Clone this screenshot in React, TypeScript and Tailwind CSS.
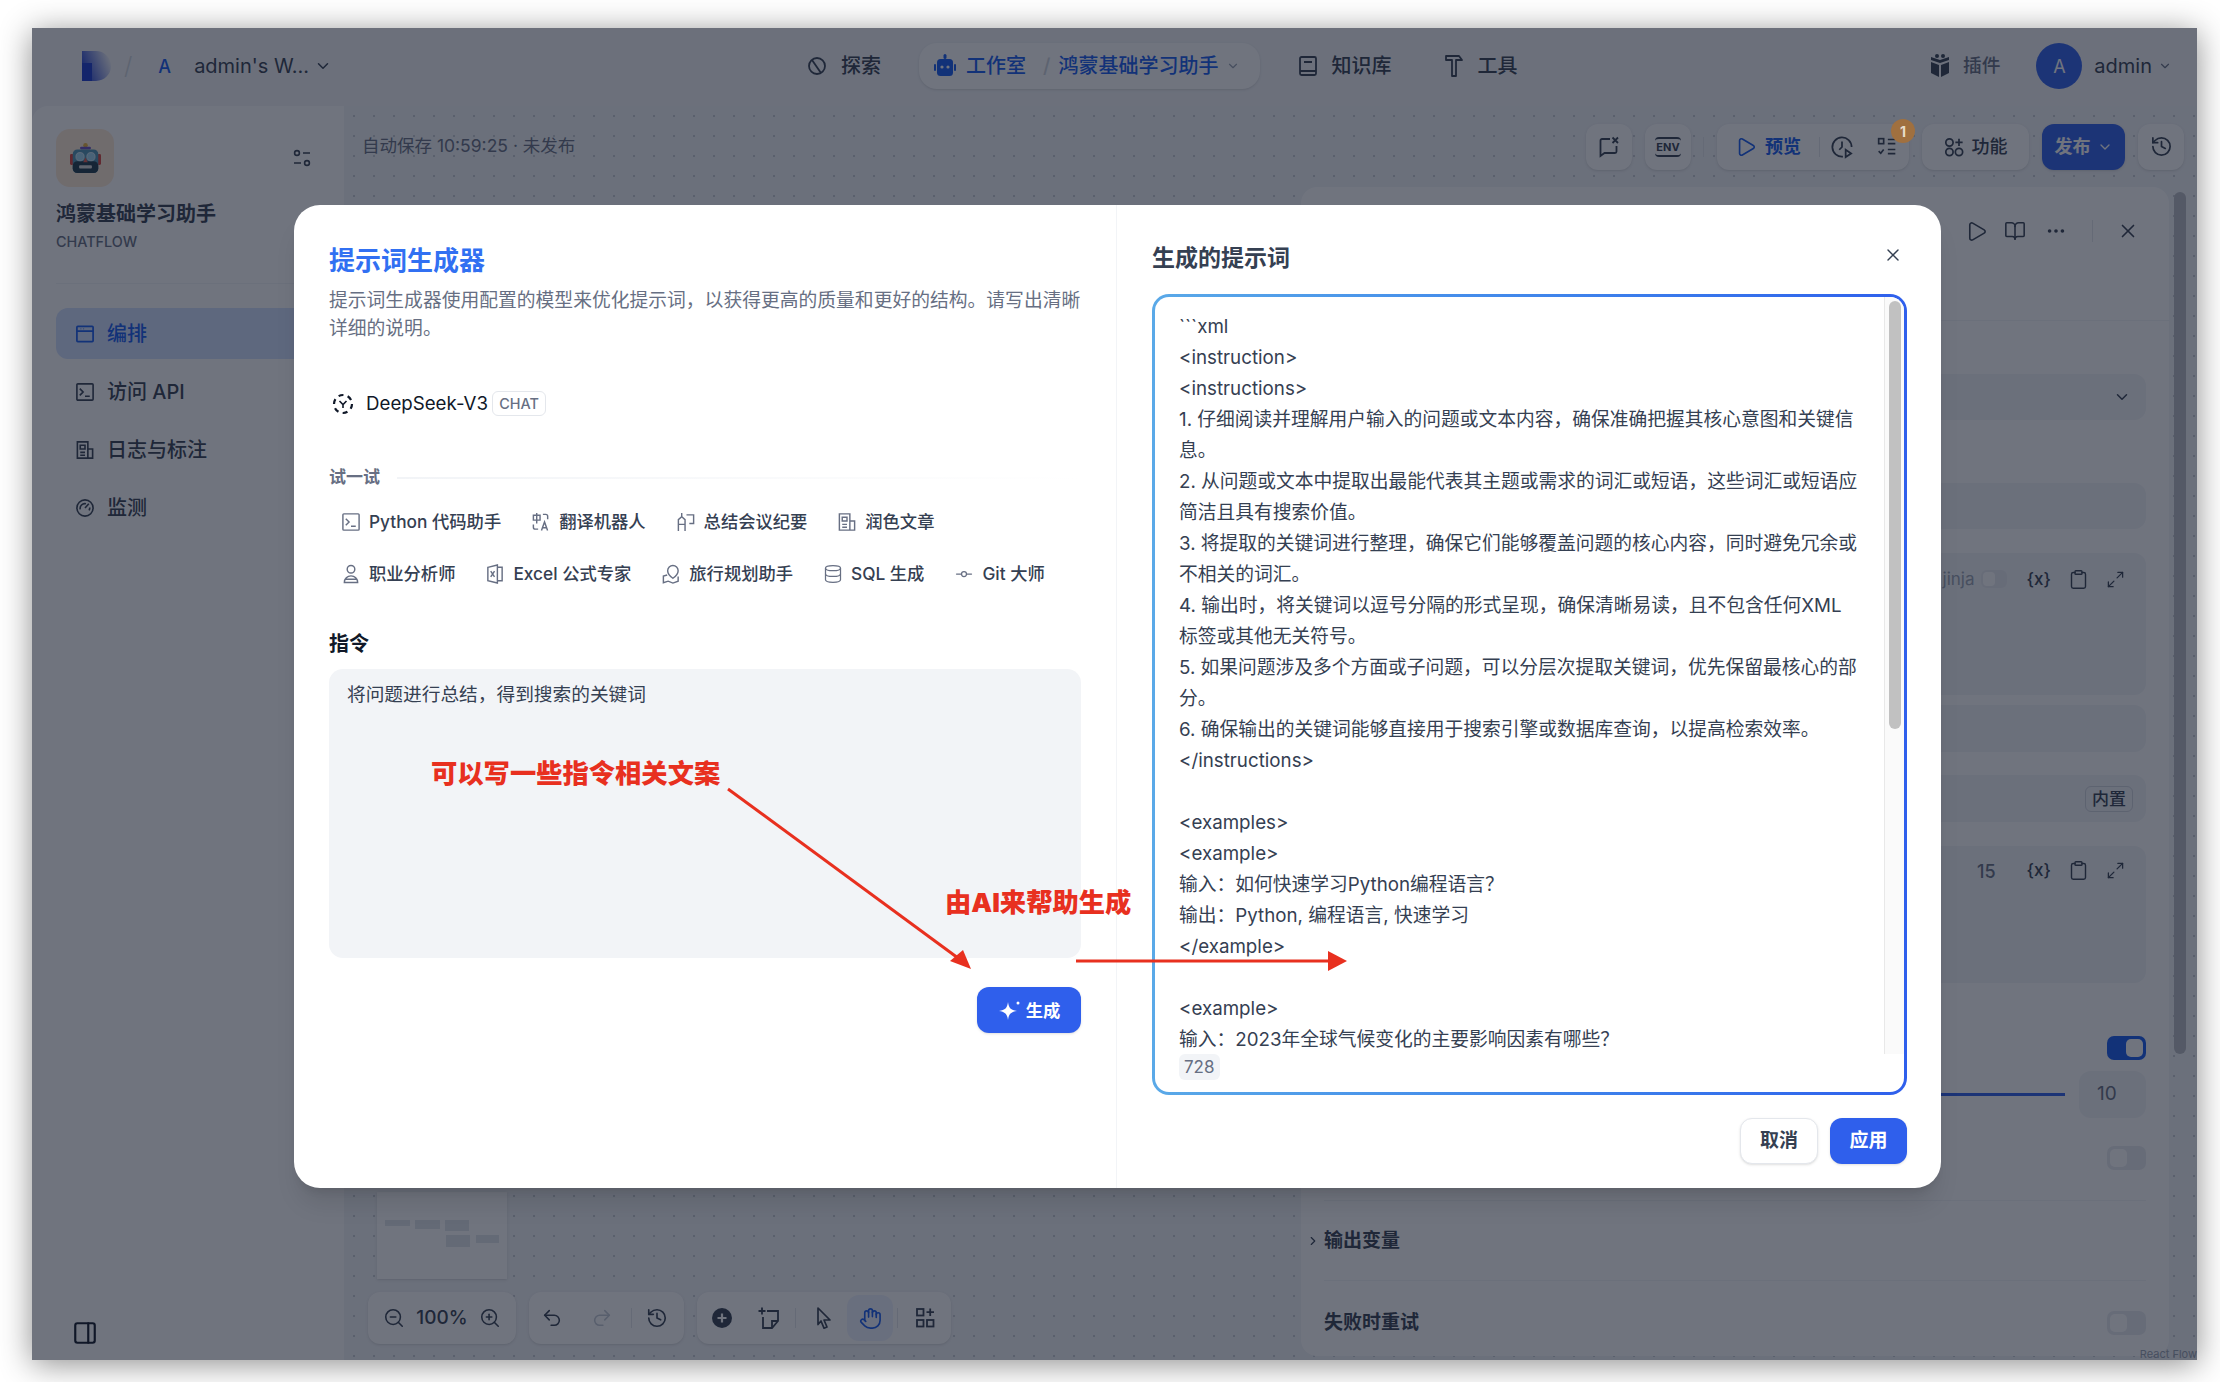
import { FC, ReactNode } from 'react';
import {
  BookOpen,
  ChevronDown,
  ChevronRight,
  Clipboard,
  Database,
  GitCommitHorizontal,
  Hand,
  History,
  Maximize2,
  MoreHorizontal,
  PanelRight,
  Play,
  Redo2,
  Undo2,
  X,
  ZoomIn,
  ZoomOut,
} from 'lucide-react';

const promptLines = [
  '```xml',
  '<instruction>',
  '<instructions>',
  '1. 仔细阅读并理解用户输入的问题或文本内容，确保准确把握其核心意图和关键信',
  '息。',
  '2. 从问题或文本中提取出最能代表其主题或需求的词汇或短语，这些词汇或短语应',
  '简洁且具有搜索价值。',
  '3. 将提取的关键词进行整理，确保它们能够覆盖问题的核心内容，同时避免冗余或',
  '不相关的词汇。',
  '4. 输出时，将关键词以逗号分隔的形式呈现，确保清晰易读，且不包含任何XML',
  '标签或其他无关符号。',
  '5. 如果问题涉及多个方面或子问题，可以分层次提取关键词，优先保留最核心的部',
  '分。',
  '6. 确保输出的关键词能够直接用于搜索引擎或数据库查询，以提高检索效率。',
  '</instructions>',
  '',
  '<examples>',
  '<example>',
  '输入：如何快速学习Python编程语言？',
  '输出：Python, 编程语言, 快速学习',
  '</example>',
  '',
  '<example>',
  '输入：2023年全球气候变化的主要影响因素有哪些？',
];

const ExploreIcon = () => (
  <svg width="20" height="22" viewBox="0 0 20 22" fill="none" stroke="currentColor" strokeWidth="1.8">
    <circle cx="10" cy="11" r="8" />
    <path d="M5 5l9 13" />
  </svg>
);

const RobotSolid = () => (
  <svg width="22" height="26" viewBox="0 0 22 26" fill="currentColor">
    <rect x="9.5" y="1" width="3" height="5" rx="1.5" />
    <rect x="3" y="6" width="16" height="17" rx="3.5" />
    <rect x="0" y="11" width="2" height="7" rx="1" />
    <rect x="20" y="11" width="2" height="7" rx="1" />
    <circle cx="8" cy="14" r="1.6" fill="#fff" />
    <circle cx="14" cy="14" r="1.6" fill="#fff" />
  </svg>
);

const BookIcon = () => (
  <svg width="20" height="24" viewBox="0 0 20 24" fill="none" stroke="currentColor" strokeWidth="1.8">
    <rect x="2" y="3" width="16" height="18" rx="1.5" />
    <path d="M2 17h16M6 8h8" />
  </svg>
);

const ToolIcon = () => (
  <svg width="22" height="26" viewBox="0 0 22 26" fill="none" stroke="currentColor" strokeWidth="1.8">
    <path d="M3 3h13l3 4h-6v16H9V7H3z" strokeLinejoin="round" />
  </svg>
);

const PluginIcon = () => (
  <svg width="22" height="26" viewBox="0 0 22 26" fill="currentColor">
    <path d="M11 7l9-3v3l-9 3-9-3V4zM2 9l8 3v12l-8-4zM20 9l-8 3v12l8-4z" />
    <circle cx="8" cy="3" r="2" />
    <circle cx="14" cy="3" r="2" />
  </svg>
);

const TuneIcon = () => (
  <svg width="18" height="22" viewBox="0 0 18 22" fill="none" stroke="currentColor" strokeWidth="1.6">
    <circle cx="4" cy="6" r="2.4" />
    <path d="M10 6h7M1 16h7" />
    <circle cx="14" cy="16" r="2.4" />
  </svg>
);

const ChatXIcon = () => (
  <svg width="24" height="24" viewBox="0 0 24 24" fill="none" stroke="currentColor" strokeWidth="1.8">
    <path d="M13 4H5a1.500 1.500 0 0 0-1.500 1.500V21l4-3H18a1.500 1.500 0 0 0 1.500-1.500V11" />
    <path d="M15.500 2.500l5.500 5.500M21 2.500L15.500 8" />
  </svg>
);

const ClockPlayIcon = () => (
  <svg width="22" height="26" viewBox="0 0 24 26" fill="none" stroke="currentColor" strokeWidth="1.9">
    <path d="M13 23.5A10.5 10.5 0 1 1 22.5 13" />
    <path d="M12 7v6l-3 3" />
    <path d="M16 16l6 4-6 4z" />
  </svg>
);

const CheckListIcon = () => (
  <svg width="20" height="24" viewBox="0 0 24 26" fill="none" stroke="currentColor" strokeWidth="2">
    <rect x="2" y="3" width="6" height="6" />
    <path d="M13 4h9M13 9h9M2 18l2.5 2.5L8 16M13 16h9M13 21h9" />
  </svg>
);

const FeatureIcon = ({ size = 20 }: { size?: number }) => (
  <svg width={size} height={size} viewBox="0 0 22 22" fill="none" stroke="currentColor" strokeWidth="1.9">
    <circle cx="6" cy="6" r="4" />
    <circle cx="6" cy="16.5" r="4" />
    <circle cx="16.5" cy="16.5" r="4" />
    <path d="M16.5 2v8M12.5 6h8" />
  </svg>
);

const GridPlusIcon = () => (
  <svg width="20" height="22" viewBox="0 0 20 22" fill="none" stroke="currentColor" strokeWidth="1.8">
    <rect x="2" y="2" width="6.5" height="6.5" />
    <rect x="2" y="13" width="6.5" height="6.5" />
    <rect x="12" y="13" width="6.5" height="6.5" />
    <path d="M15.2 1.5v7.5M11.5 5.2h7.5" />
  </svg>
);

const PlusCircleSolid = () => (
  <svg width="22" height="22" viewBox="0 0 22 22">
    <circle cx="11" cy="11" r="10" fill="currentColor" />
    <path d="M11 6.5v9M6.5 11h9" stroke="#fff" strokeWidth="2.2" />
  </svg>
);

const NotePlusIcon = () => (
  <svg width="24" height="24" viewBox="0 0 24 24" fill="none" stroke="currentColor" strokeWidth="1.8">
    <path d="M10 5h11v10l-6 7H6V11" />
    <path d="M21 15h-6v7M5 1.500v7M1.500 5h7" />
  </svg>
);

const PointerIcon = () => (
  <svg width="20" height="24" viewBox="0 0 20 24" fill="none" stroke="currentColor" strokeWidth="1.7" strokeLinejoin="round">
    <path d="M4 2l12 12h-6l3 7-3 1.200-3-7.200-3 3.500z" />
  </svg>
);

const SparkleIcon = () => (
  <svg width="24" height="24" viewBox="0 0 24 24" fill="#fff">
    <path d="M10 3c.8 6 2.700 8 9 9-6.300 1-8.200 3-9 9-.8-6-2.700-8-9-9 6.300-1 8.200-3 9-9z" />
    <circle cx="20" cy="4" r="1.500" />
  </svg>
);

const DeepSeekIcon = () => (
  <svg width="22" height="22" viewBox="0 0 22 22" fill="none" stroke="#101828" strokeWidth="2.2">
    <circle cx="11" cy="11" r="9" strokeDasharray="5 4.4" />
    <path d="M7.500 8l3.500 3.500L14.500 8M11 11.500V15" strokeWidth="1.6" />
  </svg>
);

const LogoMark = () => (
  <svg width="29" height="30" viewBox="0 0 29 30">
    <defs>
      <linearGradient id="logoFill" x1="0" y1="0.7" x2="1" y2="0.3">
        <stop offset="0" stopColor="#1a3ad0" />
        <stop offset="1" stopColor="#f5f6f8" />
      </linearGradient>
    </defs>
    <path d="M0 0h14a15 15 0 0 1 0 30H10V14H0z" fill="url(#logoFill)" />
    <rect x="0" y="12" width="10" height="18" fill="#1a3ad0" />
  </svg>
);

const RobotEmoji = () => (
  <svg width="31" height="33" viewBox="0 0 34 36">
    <circle cx="17" cy="3.500" r="2.500" fill="#e8b23a" />
    <rect x="11" y="5" width="12" height="3" rx="1.500" fill="#6a4fc0" />
    <rect x="0" y="13" width="4" height="12" rx="1.500" fill="#d8453c" />
    <rect x="30" y="13" width="4" height="12" rx="1.500" fill="#d8453c" />
    <rect x="3" y="8" width="28" height="26" rx="5" fill="#4f93b4" />
    <rect x="3" y="21" width="28" height="13" rx="5" fill="#1f3b4c" />
    <circle cx="11" cy="16" r="4.500" fill="#9fd4f0" stroke="#d6eaf4" />
    <circle cx="23" cy="16" r="4.500" fill="#9fd4f0" stroke="#d6eaf4" />
    <path d="M17 17l2.500 5h-5z" fill="#e0574c" />
    <rect x="10" y="25.500" width="14" height="3.500" rx="1" fill="#d8d8d8" />
  </svg>
);

const StrokeIcon: FC<{ children: ReactNode; width?: number }> = ({ children, width = 1.5 }) => (
  <svg width="20" height="20" viewBox="0 0 21 21" fill="none" stroke="currentColor" strokeWidth={width}>
    {children}
  </svg>
);

const TerminalIcon = ({ width }: { width?: number }) => (
  <StrokeIcon width={width}>
    <rect x="2" y="2" width="17" height="17" rx="1" />
    <path d="M5 7l3.500 3.500L5 14M10.500 15h5" />
  </StrokeIcon>
);

const TranslateIcon = () => (
  <StrokeIcon>
    <path d="M2.500 3.500h7v5h-7zM6 1v11" />
    <path d="M11 19.500l3.200-9 3.200 9M12.200 16.500h4" />
    <path d="M12.500 2.500h3a2 2 0 0 1 2 2v3M2.500 13v3a2 2 0 0 0 2 2h3" />
  </StrokeIcon>
);

const MeetingIcon = () => (
  <StrokeIcon>
    <path d="M2.500 20V8l3.500-3 3.500 3v12M2.500 13h7M6 5V1" />
    <path d="M11 3h7.500v9H14" />
  </StrokeIcon>
);

const NewsIcon = ({ width }: { width?: number }) => (
  <StrokeIcon width={width}>
    <path d="M2.500 2h11v17h-11zM13.500 9.500h5V19h-5" />
    <path d="M5.500 5.500h5v4h-5zM5.500 13h5M5.500 16h5" />
  </StrokeIcon>
);

const PersonIcon = () => (
  <StrokeIcon>
    <circle cx="10.500" cy="5.500" r="4" />
    <path d="M3.500 19.500a7 7 0 0 1 14 0zM3.800 16h13.400" />
  </StrokeIcon>
);

const ExcelIcon = () => (
  <StrokeIcon>
    <path d="M3 3.500l10-2.500v19l-10-2.500zM13 3.500h5v14h-5" />
    <path d="M6 7.500l4 6M10 7.500l-4 6" />
  </StrokeIcon>
);

const MapPinIcon = () => (
  <StrokeIcon>
    <path d="M12.500 1.500a5.500 5.500 0 0 1 5.500 5.500c0 4-5.500 8-5.500 8S7 11 7 7a5.500 5.500 0 0 1 5.500-5.500z" />
    <path d="M6.500 11.500l-4 1.200v7l5-1.700 5 2 5.500-2v-5" />
  </StrokeIcon>
);

const WindowIcon = () => (
  <StrokeIcon width={1.8}>
    <rect x="2" y="2.500" width="17" height="16" rx="1" />
    <path d="M2 7.500h17M6 5h.5M9 5h.5" />
  </StrokeIcon>
);

const MonitorIcon = () => (
  <StrokeIcon width={1.7}>
    <circle cx="10.500" cy="10.500" r="8.500" />
    <path d="M5.500 12a5 5 0 0 1 6-6M10.500 10.500l4-4.500M15.500 10a5 5 0 0 1-.8 3" />
  </StrokeIcon>
);

const NavItem: FC<{ icon: ReactNode; label: string; active?: boolean }> = ({ icon, label, active }) => (
  <div
    className={`flex h-[51px] items-center gap-[12px] rounded-xl pl-[19px] text-[20px] font-medium ${
      active ? 'bg-[#d1e0ff] text-[#155aef]' : 'text-[#354052]'
    }`}
  >
    {icon}
    <span>{label}</span>
  </div>
);

const ToolButton: FC<{ children: ReactNode }> = ({ children }) => (
  <div className="flex h-[46px] w-[46px] items-center justify-center rounded-xl bg-white text-[#354052] shadow-sm">
    {children}
  </div>
);

const Toggle: FC<{ on?: boolean }> = ({ on }) => (
  <div className={`flex h-[24px] w-[39px] items-center rounded-[7px] p-[3px] ${on ? 'justify-end bg-[#155aef]' : 'bg-[#e9ebf0]'}`}>
    <div className="h-[18px] w-[17px] rounded-[5px] bg-white" />
  </div>
);

const PromptChip: FC<{ icon: ReactNode; label: string }> = ({ icon, label }) => (
  <div className="flex h-10 items-center gap-2 rounded-lg px-3 text-[17.3px] font-medium whitespace-nowrap text-[#354052]">
    <span className="text-[#676f83]">{icon}</span>
    <span>{label}</span>
  </div>
);

const FieldActions: FC = () => (
  <div className="flex items-center gap-[17px] text-[#354052]">
    <span className="text-[17px] font-medium">{'{x}'}</span>
    <Clipboard size={21} strokeWidth={1.6} />
    <Maximize2 size={19} strokeWidth={1.6} />
  </div>
);

const AppBackground: FC = () => (
  <div className="flex h-full w-full flex-col bg-[#f4f5f8]">
    <header className="flex h-[78px] shrink-0 items-center pb-[2px] text-[20px] font-medium text-[#354052]">
      <div className="flex w-[775px] shrink-0 items-center pl-[50px]">
        <LogoMark />
        <span className="ml-[13px] text-[24px] font-light text-[#d0d5dd]">/</span>
        <span className="ml-[26px] text-[18px] text-[#155aef]">A</span>
        <span className="ml-[23px] w-[110px] font-normal whitespace-nowrap">admin&apos;s W...</span>
        <ChevronDown size={18} className="ml-[10px]" />
      </div>
      <div className="flex items-center gap-[14px]">
        <ExploreIcon />
        <span>探索</span>
      </div>
      <div className="ml-[38px] flex h-[46px] items-center rounded-[18px] bg-white pl-[15px] pr-[20px] text-[#155aef] shadow-sm">
        <RobotSolid />
        <span className="ml-[10px]">工作室</span>
        <span className="ml-[17px] text-[#d0d5dd]">/</span>
        <span className="ml-[8px]">鸿蒙基础学习助手</span>
        <ChevronDown size={14} className="ml-[8px] text-[#98a2b2]" />
      </div>
      <div className="ml-[38px] flex items-center gap-[13px]">
        <BookIcon />
        <span>知识库</span>
      </div>
      <div className="ml-[52px] flex items-center gap-[12px]">
        <ToolIcon />
        <span>工具</span>
      </div>
      <div className="ml-auto flex items-center pr-[25px]">
        <PluginIcon />
        <span className="ml-[12px] text-[18.7px] text-[#676f83]">插件</span>
        <div className="ml-[36px] flex h-[46px] w-[46px] items-center justify-center rounded-full bg-[#2f5fec] text-[18px] font-normal text-white">
          A
        </div>
        <span className="ml-[12px] font-normal">admin</span>
        <ChevronDown size={14} className="ml-[6px] text-[#676f83]" />
      </div>
    </header>

    <div className="flex min-h-0 flex-1">
      <aside className="flex w-[312px] shrink-0 flex-col rounded-tl-2xl bg-white pb-[14px]">
        <div className="mt-[23px] flex items-center justify-between pl-[24px] pr-[33px]">
          <div className="flex h-[58px] w-[58px] items-center justify-center rounded-[14px] bg-[#ffead5]">
            <RobotEmoji />
          </div>
          <span className="text-[#354052]">
            <TuneIcon />
          </span>
        </div>
        <div className="mt-[13px] pl-[24px] text-[20px] leading-[28px] font-semibold text-[#354052]">鸿蒙基础学习助手</div>
        <div className="mt-[4px] pl-[24px] text-[14.4px] leading-[20px] font-medium text-[#676f83]">CHATFLOW</div>
        <div className="mx-[24px] mt-[31px] h-px bg-[#f2f4f7]" />
        <nav className="mt-[24px] flex flex-col gap-[7px] px-[24px]">
          <NavItem active icon={<WindowIcon />} label="编排" />
          <NavItem icon={<TerminalIcon width={1.7} />} label="访问 API" />
          <NavItem icon={<NewsIcon width={1.7} />} label="日志与标注" />
          <NavItem icon={<MonitorIcon />} label="监测" />
        </nav>
        <div className="mt-auto pl-[40px] text-[#101828]">
          <PanelRight size={26} strokeWidth={2} />
        </div>
      </aside>

      <main className="relative flex min-w-0 flex-1 flex-col bg-[#f2f4f7] bg-[radial-gradient(#c8ccd4_1.2px,transparent_1.2px)] bg-[size:20px_20px]">
        <div className="flex h-[81px] shrink-0 items-center justify-between pl-[18px] pr-[13px]">
          <span className="text-[17.5px] text-[#676f83]">自动保存 10:59:25 · 未发布</span>
          <div className="flex items-center">
            <ToolButton>
              <ChatXIcon />
            </ToolButton>
            <div className="ml-[13px]">
              <ToolButton>
                <span className="rounded-[4px] border-y-2 border-[#354052] px-px text-[11px] leading-[16px] font-bold">ENV</span>
              </ToolButton>
            </div>
            <div className="ml-[12px] h-[20px] w-px bg-[#e4e7ec]" />
            <div className="ml-[13px] flex h-[46px] w-[192px] items-center rounded-xl bg-white pl-[18px] text-[#354052] shadow-sm">
              <Play size={22} strokeWidth={1.8} className="text-[#155aef]" />
              <span className="ml-[8px] text-[18px] font-semibold text-[#155aef]">预览</span>
              <div className="ml-[18px] h-[20px] w-px bg-[#e4e7ec]" />
              <span className="ml-[11px]">
                <ClockPlayIcon />
              </span>
              <span className="ml-[24px]">
                <CheckListIcon />
              </span>
            </div>
            <div className="ml-[13px] flex h-[46px] w-[107px] items-center justify-center gap-[8px] rounded-xl bg-white text-[18px] font-medium text-[#354052] shadow-sm">
              <FeatureIcon />
              <span>功能</span>
            </div>
            <div className="ml-[13px] flex h-[46px] w-[83px] items-center justify-center gap-[6px] rounded-xl bg-[#2f5fec] text-[18px] font-semibold text-white shadow-sm">
              <span>发布</span>
              <ChevronDown size={16} />
            </div>
            <div className="ml-[13px]">
              <ToolButton>
                <History size={23} strokeWidth={1.8} />
              </ToolButton>
            </div>
          </div>
        </div>

        <div className="flex min-h-0 flex-1">
          <div className="flex min-w-0 flex-1 flex-col items-start justify-end pb-[16px] pl-[24px]">
            <div className="mb-[13px] ml-[9px] flex h-[87px] w-[130px] flex-col gap-[4px] bg-white px-[8px] pt-[28px] shadow-sm">
              <div className="flex items-start gap-[5px]">
                <div className="h-[6px] w-[25px] bg-[#e2e5ea]" />
                <div className="h-[9px] w-[25px] bg-[#e2e5ea]" />
                <div className="h-[11px] w-[24px] bg-[#e2e5ea]" />
              </div>
              <div className="flex items-start gap-[6px] pl-[61px]">
                <div className="h-[12px] w-[24px] bg-[#e2e5ea]" />
                <div className="h-[8px] w-[24px] bg-[#e2e5ea]" />
              </div>
            </div>
            <div className="flex items-center gap-[13px] text-[#354052]">
              <div className="flex h-[52px] w-[148px] items-center justify-between rounded-xl bg-white px-[15px] shadow-sm">
                <ZoomOut size={22} strokeWidth={1.7} />
                <span className="text-[19px] font-medium">100%</span>
                <ZoomIn size={22} strokeWidth={1.7} />
              </div>
              <div className="flex h-[52px] w-[155px] items-center rounded-xl bg-white pl-[12px] shadow-sm">
                <Undo2 size={22} strokeWidth={1.7} />
                <Redo2 size={22} strokeWidth={1.7} className="ml-[28px] text-[#c4cad4]" />
                <div className="ml-[18px] h-[20px] w-px bg-[#e4e7ec]" />
                <History size={22} strokeWidth={1.8} className="ml-[14px]" />
              </div>
              <div className="flex h-[52px] w-[254px] items-center rounded-xl bg-white pl-[14px] shadow-sm">
                <PlusCircleSolid />
                <span className="ml-[24px]">
                  <NotePlusIcon />
                </span>
                <div className="ml-[14px] h-[20px] w-px bg-[#e4e7ec]" />
                <span className="ml-[18px]">
                  <PointerIcon />
                </span>
                <div className="ml-[13px] flex h-[46px] w-[46px] items-center justify-center rounded-xl bg-[#eef2ff] text-[#155aef]">
                  <Hand size={23} strokeWidth={1.7} />
                </div>
                <div className="ml-[4px] h-[20px] w-px bg-[#e4e7ec]" />
                <span className="ml-[17px]">
                  <GridPlusIcon />
                </span>
              </div>
            </div>
          </div>

          <section className="mb-[4px] mr-[28px] flex w-[868px] shrink-0 flex-col rounded-2xl bg-white px-[23px]">
            <div className="-mx-[23px] flex h-[134px] shrink-0 items-start justify-end border-b border-[#f2f4f7] pr-[30px] pt-[33px] text-[#354052]">
              <Play size={23} strokeWidth={1.7} />
              <BookOpen size={22} strokeWidth={1.7} className="ml-[16px]" />
              <MoreHorizontal size={22} className="ml-[19px]" />
              <div className="ml-[25px] h-[22px] w-px bg-[#e4e7ec]" />
              <X size={22} strokeWidth={1.8} className="ml-[24px]" />
            </div>
            <div className="mt-[53px] flex h-[46px] items-center justify-end rounded-xl bg-[#f2f4f7] pr-[15px] text-[#354052]">
              <ChevronDown size={18} />
            </div>
            <div className="mt-[63px] h-[46px] rounded-xl bg-[#f2f4f7]" />
            <div className="mt-[24px] flex h-[142px] items-start justify-end rounded-xl bg-[#f2f4f7] pr-[21px] pt-[14px]">
              <span className="mr-[6px] text-[17px] text-[#98a2b2]">jinja</span>
              <div className="mr-[20px] mt-[3px] flex h-[18px] w-[26px] items-center rounded-[6px] bg-[#e9ebf0] p-[2px]">
                <div className="h-[14px] w-[12px] rounded-[4px] bg-white" />
              </div>
              <FieldActions />
            </div>
            <div className="mt-[10px] h-[47px] rounded-xl bg-[#f2f4f7]" />
            <div className="mt-[23px] flex h-[47px] items-center justify-end rounded-xl bg-[#f2f4f7] pr-[13px]">
              <span className="rounded-md border border-[#d0d5dd] px-[6px] text-[17px] leading-[24px] font-medium text-[#354052]">内置</span>
            </div>
            <div className="mt-[24px] flex h-[137px] items-start justify-end rounded-xl bg-[#f2f4f7] pr-[21px] pt-[12px]">
              <span className="mr-[31px] text-[18px] font-medium text-[#676f83]">15</span>
              <FieldActions />
            </div>
            <div className="mt-[53px] flex justify-end">
              <Toggle on />
            </div>
            <div className="mt-[11px] flex h-[47px] items-center justify-end gap-[14px]">
              <div className="h-[3px] flex-1 bg-[#2f5fec]" />
              <div className="flex h-[47px] w-[67px] items-center rounded-xl bg-[#f2f4f7] pl-[18px] text-[19px] text-[#676f83]">10</div>
            </div>
            <div className="mt-[28px] flex justify-end">
              <Toggle />
            </div>
            <div className="mt-[30px] h-px bg-[#f2f4f7]" />
            <div className="mt-[26px] flex h-[28px] items-center text-[19px] font-semibold text-[#354052]">
              <ChevronRight size={14} className="-ml-[18px] mr-[4px]" />
              <span>输出变量</span>
            </div>
            <div className="mt-[25px] h-px bg-[#f2f4f7]" />
            <div className="mt-[28px] flex items-center justify-between text-[19px] font-semibold text-[#354052]">
              <span>失败时重试</span>
              <Toggle />
            </div>
          </section>
        </div>

        <div className="absolute right-[11px] top-[86px] h-[862px] w-[12px] rounded-full bg-[#b9bcc2]" />
        <span className="absolute bottom-0 right-0 text-[11px] leading-[11px] text-[#98a2b2]">React Flow</span>
      </main>
    </div>
    {/* badge sits over the dim layer in the shot */}
    <div className="absolute left-[1859px] top-[91px] z-20 flex h-[24px] w-[24px] items-center justify-center rounded-full bg-[#a0703f] text-[14px] font-bold text-[#e8dccb]">
      1
    </div>
  </div>
);

const PromptModal: FC = () => (
  <div className="absolute left-[262px] top-[177px] z-10 flex h-[983px] w-[1647px] rounded-[26px] bg-white shadow-xl">
    <div className="flex w-[823px] shrink-0 flex-col border-r border-[#f2f4f7] pl-[35px] pr-[35px] pt-[37px]">
      <h1 className="text-[26px] leading-[37px] font-semibold text-[#3170f2]">提示词生成器</h1>
      <p className="mt-[8px] text-[18.8px] leading-[28px] text-[#676f83]">
        提示词生成器使用配置的模型来优化提示词，以获得更高的质量和更好的结构。请写出清晰详细的说明。
      </p>
      <div className="mt-[48px] flex h-[25px] items-center">
        <span className="ml-[3px]">
          <DeepSeekIcon />
        </span>
        <span className="ml-[12px] text-[18.7px] leading-[25px] text-[#101828]">DeepSeek-V3</span>
        <span className="ml-[4px] flex h-[25px] w-[54px] items-center justify-center rounded-md border border-[#e4e7ec] text-[14.4px] font-medium text-[#676f83]">
          CHAT
        </span>
      </div>
      <div className="mt-[50px] flex h-[24px] items-center">
        <span className="text-[17px] font-semibold text-[#676f83]">试一试</span>
        <div className="ml-[17px] h-[2px] flex-1 bg-gradient-to-r from-[#f2f4f7] to-white" />
      </div>
      <div className="mt-[12px] flex gap-[6px]">
        <PromptChip icon={<TerminalIcon />} label="Python 代码助手" />
        <PromptChip icon={<TranslateIcon />} label="翻译机器人" />
        <PromptChip icon={<MeetingIcon />} label="总结会议纪要" />
        <PromptChip icon={<NewsIcon />} label="润色文章" />
      </div>
      <div className="mt-[12px] flex gap-[6px]">
        <PromptChip icon={<PersonIcon />} label="职业分析师" />
        <PromptChip icon={<ExcelIcon />} label="Excel 公式专家" />
        <PromptChip icon={<MapPinIcon />} label="旅行规划助手" />
        <PromptChip icon={<Database size={20} strokeWidth={1.5} />} label="SQL 生成" />
        <PromptChip icon={<GitCommitHorizontal size={20} strokeWidth={1.5} />} label="Git 大师" />
      </div>
      <div className="mt-[36px] text-[20px] leading-[28px] font-semibold text-[#101828]">指令</div>
      <div className="mt-[11px] h-[289px] rounded-[14px] bg-[#f2f4f7] px-[18px] py-[12px] text-[18.7px] leading-[28px] text-[#354052]">
        将问题进行总结，得到搜索的关键词
      </div>
      <button className="mt-[29px] flex h-[46px] w-[104px] items-center justify-center gap-[4px] self-end rounded-xl bg-[#2f5fec] pt-px text-[17.3px] font-semibold text-white shadow-sm">
        <SparkleIcon />
        <span>生成</span>
      </button>
    </div>

    <div className="flex min-w-0 flex-1 flex-col pl-[35px] pr-[34px] pt-[37px]">
      <div className="flex h-[32px] items-start justify-between pr-[4px]">
        <h2 className="text-[23px] leading-[32px] font-semibold text-[#354052]">生成的提示词</h2>
        <X size={20} strokeWidth={1.7} className="mt-[3px] text-[#354052]" />
      </div>
      <div className="mt-[20px] h-[801px] rounded-[17px] bg-gradient-to-r from-[#5aa9e8] to-[#2f5fec] p-[3px]">
        <div className="flex h-full flex-col overflow-hidden rounded-[14px] bg-white">
          <div className="flex h-[757px] shrink-0">
            <div className="min-w-0 flex-1 overflow-hidden pl-[24px] pt-[14px] text-[18.75px] leading-[31px] whitespace-nowrap text-[#354052]">
              {promptLines.map((line, i) => (
                <div key={i} className="h-[31px]">
                  {line}
                </div>
              ))}
            </div>
            <div className="w-[20px] shrink-0 border-l border-[#e8e8e8] bg-[#fafafa] pl-[4px] pt-[4px]">
              <div className="h-[428px] w-[12px] rounded-full bg-[#c1c1c1]" />
            </div>
          </div>
          <div className="pl-[24px]">
            <span className="inline-block h-[26px] rounded-md bg-[#f2f4f7] px-[5px] text-[17px] leading-[27px] text-[#676f83]">728</span>
          </div>
        </div>
      </div>
      <div className="mt-[23px] flex justify-end gap-[12px]">
        <button className="h-[46px] w-[78px] rounded-xl border border-[#e4e7ec] bg-white pt-px text-[19px] font-semibold text-[#354052] shadow-sm">
          取消
        </button>
        <button className="h-[46px] w-[77px] rounded-xl bg-[#2f5fec] pt-px text-[19px] font-semibold text-white shadow-sm">应用</button>
      </div>
    </div>
  </div>
);

const Annotations: FC = () => (
  <>
    <svg className="pointer-events-none absolute left-0 top-0 z-30" width="2220" height="1382" viewBox="0 0 2220 1382">
      <path d="M728 789L958 958" stroke="#e8301f" strokeWidth="3" fill="none" />
      <polygon points="971,969 950,961 963,950" fill="#e8301f" />
      <path d="M1076 961H1330" stroke="#e8301f" strokeWidth="3" fill="none" />
      <polygon points="1347,961 1328,951 1328,971" fill="#e8301f" />
    </svg>
    <span className="absolute left-[431px] top-[756px] z-30 text-[26.3px] leading-[36px] font-black whitespace-nowrap text-[#e8301f]">
      可以写一些指令相关文案
    </span>
    <span className="absolute left-[945px] top-[885px] z-30 text-[26.3px] leading-[36px] font-black whitespace-nowrap text-[#e8301f]">
      由AI来帮助生成
    </span>
  </>
);

const App: FC = () => {
  return (
    <div className="relative h-[1382px] w-[2220px] overflow-hidden bg-white font-[family-name:Inter,'Noto_Sans_CJK_SC',sans-serif]">
      <div className="absolute left-[32px] top-[28px] h-[1332px] w-[2165px] overflow-hidden">
        <AppBackground />
        <div className="absolute inset-0 bg-[#101828]/60" />
        <PromptModal />
      </div>
      <div className="pointer-events-none absolute left-[32px] top-[28px] h-[1332px] w-[2165px] shadow-[0_4px_30px_rgba(0,0,0,0.45)]" />
      <Annotations />
    </div>
  );
};

export default App;
